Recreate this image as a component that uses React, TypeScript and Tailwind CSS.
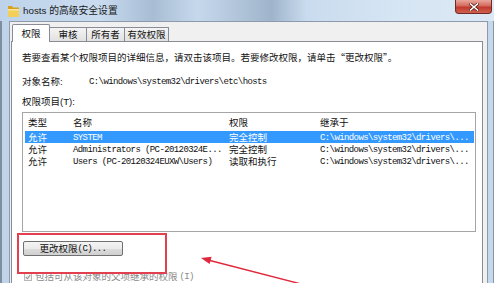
import React from "react";

const rows = [
  { type: "允许", name: "SYSTEM", perm: "完全控制", from: "C:\\windows\\system32\\drivers\\...", sel: true },
  { type: "允许", name: "Administrators (PC-20120324E...", perm: "完全控制", from: "C:\\windows\\system32\\drivers\\...", sel: false },
  { type: "允许", name: "Users (PC-20120324EUXW\\Users)", perm: "读取和执行", from: "C:\\windows\\system32\\drivers\\...", sel: false },
];

function Folder() {
  return (
    <svg width="13" height="14" viewBox="0 0 13 14">
      <path d="M1 2 L5 2 L6 3.5 L12 3.5 L12 13 L1 13 Z" fill="#d9a21e" />
      <path d="M1 5 L12 5 L12 13 L1 13 Z" fill="#f3cf5a" />
      <path d="M1 5 L12 5 L12 6.5 L1 6.5 Z" fill="#fbe69a" />
    </svg>
  );
}

export default function App() {
  return (
    <div className="relative w-[494px] h-[283px] overflow-hidden bg-[#c2d5ea] [font-family:'Liberation_Sans','Noto_Sans_CJK_SC',sans-serif] text-[9.5px] text-[#111]">
      {/* title bar */}
      <div className="h-[21px] flex items-center bg-[linear-gradient(90deg,#bed3ea_0%,#c9dbef_20%,#b3c8de_27%,#a8bdd4_31%,#c6d8ec_40%,#9fb4cb_55%,#c9dbee_62%,#d6e5f4_80%,#dce8f5_100%)]">
        <div className="ml-[7px] mt-[1px]">
          <Folder />
        </div>
        <div className="ml-[3px] leading-[12px] text-[9.8px] text-[#1a1a1a]">hosts 的高级安全设置</div>
        <div className="ml-auto mr-[2px] self-start w-[37px] h-[14px] rounded-b-[4px] border border-t-0 border-[#6e2a25] bg-[linear-gradient(180deg,#eaa79c_0%,#d46a5c_45%,#c0392d_55%,#d1614f_100%)] flex items-center justify-center">
          <svg width="10" height="8" viewBox="0 0 10 8">
            <path d="M1.5 1 L8.5 7 M8.5 1 L1.5 7" stroke="#5a1f1a" strokeWidth="3" strokeLinecap="square" />
            <path d="M1.5 1 L8.5 7 M8.5 1 L1.5 7" stroke="#ffffff" strokeWidth="1.6" strokeLinecap="square" />
          </svg>
        </div>
      </div>

      {/* body */}
      <div className="flex h-[262px]">
        <div className="w-[9px] border-l-[2px] border-[#7d8ea0] bg-[#c0d3e8]" />
        <div className="w-[479px] bg-[#f0f0f0] border-l border-t border-r border-[#8d9aab] flex flex-col">
          {/* tabs */}
          <div className="relative z-10 flex items-end h-[20px] pl-[2px]">
            <div className="h-[18px] -mb-px w-[38px] bg-white border-x border-t border-[#898c95] rounded-t-[2px] flex items-start justify-center pt-[3px] leading-[12px]">
              权限
            </div>
            <div className="h-[14px] w-[37px] bg-[linear-gradient(180deg,#f4f4f4,#e1e1e1)] border-r border-t border-[#898c95] flex items-center justify-center leading-[12px]">
              审核
            </div>
            <div className="h-[14px] w-[38px] bg-[linear-gradient(180deg,#f4f4f4,#e1e1e1)] border-r border-t border-[#898c95] flex items-center justify-center leading-[12px]">
              所有者
            </div>
            <div className="h-[14px] w-[44px] bg-[linear-gradient(180deg,#f4f4f4,#e1e1e1)] border-r border-t border-[#898c95] flex items-center justify-center leading-[12px]">
              有效权限
            </div>
          </div>
          {/* panel */}
          <div className="ml-[1px] w-[472px] flex-1 bg-white border border-b-0 border-[#898c95] pl-[10px] pt-[9px] flex flex-col">
            <div className="leading-[12px] whitespace-nowrap">
              若要查看某个权限项目的详细信息，请双击该项目。若要修改权限，请单击<span className="[font-family:'Noto_Sans_CJK_SC',sans-serif]">“</span>更改权限<span className="[font-family:'Noto_Sans_CJK_SC',sans-serif]">”</span>。
            </div>
            <div className="mt-[12px] flex leading-[12px]">
              <span className="w-[67px]">对象名称:</span>
              <span className="[font-family:'Liberation_Mono',monospace] text-[9px] tracking-[-0.6px]">C:\windows\system32\drivers\etc\hosts</span>
            </div>
            <div className="mt-[8px] leading-[12px]">权限项目(T):</div>
            <div className="mt-[4px] w-[454px] h-[120px] border border-[#a5a5a5] flex flex-col">
              <div className="h-[18px] flex items-center pt-[2px] pl-[5px] leading-[12px]">
                <span className="w-[45px]">类型</span>
                <span className="w-[156px]">名称</span>
                <span className="w-[91px]">权限</span>
                <span>继承于</span>
              </div>
              {rows.map((r, i) => (
                <div
                  key={i}
                  className={
                    r.sel
                      ? "ml-[2px] mr-[1px] h-[12px] flex items-center pt-px pl-[3px] leading-[12px] bg-[#3399ff] text-white"
                      : "ml-[2px] mr-[1px] h-[12px] flex items-center pt-px pl-[3px] leading-[12px]"
                  }
                >
                  <span className="w-[45px]">{r.type}</span>
                  <span className="w-[156px] [font-family:'Liberation_Mono',monospace] text-[9px] tracking-[-0.6px] whitespace-pre">{r.name}</span>
                  <span className="w-[91px]">{r.perm}</span>
                  <span className="[font-family:'Liberation_Mono',monospace] text-[9px] tracking-[-0.6px]">{r.from}</span>
                </div>
              ))}
            </div>
            <div className="mt-[9px] ml-[1px] w-[100px] h-[15px] rounded-[2px] border border-[#707070] bg-[linear-gradient(180deg,#f4f4f4_0%,#ebebeb_50%,#dcdcdc_52%,#d0d0d0_100%)] flex items-center justify-center leading-[12px]">
              更改权限<span className="[font-family:'Liberation_Mono',monospace] text-[9px] tracking-[-0.6px]">(C)...</span>
            </div>
            <div className="mt-[15px] ml-[2px] flex items-center h-[12px] leading-[12px] text-[#8a8a8a]">
              <div className="w-[8px] h-[8px] border border-[#b8b8b8] bg-[#f4f4f4] flex items-center justify-center">
                <svg width="6" height="6" viewBox="0 0 6 6">
                  <path d="M0.8 3 L2.4 4.6 L5.2 1.2" stroke="#9a9a9a" strokeWidth="1.2" fill="none" />
                </svg>
              </div>
              <span className="ml-[3px]">包括可从该对象的父项继承的权限</span>
              <span className="ml-[2px] [font-family:'Liberation_Mono',monospace] text-[9px] tracking-[-0.6px]">(I)</span>
            </div>
          </div>
        </div>
        <div className="flex-1 bg-[#c6d8ec] border-r border-[#8596a8]" />
      </div>

      {/* annotations */}
      <div className="absolute left-[17px] top-[233px] w-[150px] h-[41px] border-2 border-[#e2404e]" />
      <svg className="absolute left-0 top-0" width="494" height="283" viewBox="0 0 494 283">
        <line x1="305" y1="285" x2="208" y2="260" stroke="#e0283c" strokeWidth="1.4" />
        <polygon points="201,258 211.6,256.8 209.6,264" fill="#e0283c" />
      </svg>
    </div>
  );
}
